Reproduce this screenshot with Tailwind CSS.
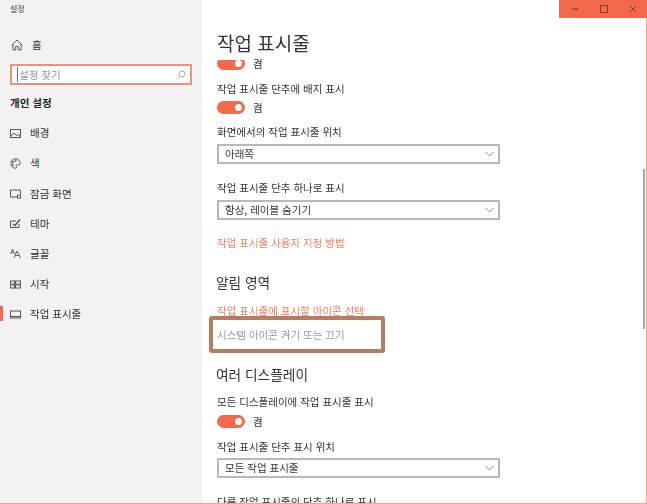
<!DOCTYPE html>
<html lang="ko">
<head>
<meta charset="UTF-8" />
<title>설정</title>
<script src="https://cdn.jsdelivr.net/npm/@tailwindcss/browser@4"></script>
</head>
<body class="bg-white overflow-hidden">
<div class="relative w-[647px] h-[504px] overflow-hidden flex blur-[0.5px] font-['Noto_Sans_CJK_KR','Noto_Sans',sans-serif] text-[10.5px] text-[#333]">

    <!-- Sidebar -->
    <aside class="w-[202px] h-full shrink-0 bg-[#f2f2f2]">
        <div class="h-[18px] pl-[10px] flex items-center text-[8px] text-[#444]">설정</div>
        <a class="h-[30px] mt-[12px] pl-[11px] flex items-center gap-[9px]">
            <svg class="w-[12px] h-[12px]" viewBox="0 0 12 12" fill="none" stroke="#555" stroke-width="1"><path d="M0.5 6.500 6 1l5.500 5.500M2 5.500V11h2.700V7.500h2.600V11H10V5.500"/></svg>
            <span>홈</span>
        </a>
        <div class="mx-[10px] mt-[4px] h-[21px] border-2 border-[#f58f7c] bg-white flex items-center justify-between pl-[5px] pr-[4px] text-[#999]">
            <span class="border-l border-[#666] pl-px">설정 찾기</span>
            <svg class="w-[10px] h-[10px]" viewBox="0 0 10 10" fill="none" stroke="#aaa"><circle cx="6" cy="4" r="3"/><path d="M4 6.200 1 9.300"/></svg>
        </div>
        <div class="mt-[8px] pl-[10px] h-[20px] flex items-center font-bold text-[#222]">개인 설정</div>
        <nav class="mt-[5px] flex flex-col">
            <a class="h-[30.200px] pl-[10px] flex items-center gap-[9px]">
                <svg class="w-[11px] h-[11px]" viewBox="0 0 11 11" fill="none" stroke="#555"><rect x="0.500" y="1.500" width="10" height="8"/><path d="M1 8l3-3 2.500 2.500L8 6.500l2 1.500"/></svg>
                <span>배경</span>
            </a>
            <a class="h-[30.200px] pl-[10px] flex items-center gap-[9px]">
                <svg class="w-[11px] h-[11px]" viewBox="0 0 11 11" fill="none" stroke="#555"><path d="M5.500 0.800a4.700 4.700 0 1 0 0 9.400c1.300 0 1.300-1 .8-1.700-.5-.8 0-1.700 1-1.700h1.500c1 0 1.400-.7 1.400-1.500C10.200 2.500 8 .8 5.500.8z"/><circle cx="3" cy="4" r=".7"/><circle cx="5.500" cy="2.800" r=".7"/><circle cx="2.800" cy="6.800" r=".7"/></svg>
                <span>색</span>
            </a>
            <a class="h-[30.200px] pl-[10px] flex items-center gap-[9px]">
                <svg class="w-[11px] h-[11px]" viewBox="0 0 11 11" fill="none" stroke="#555"><path d="M7 9H.5V2h10v4"/><rect x="7.500" y="7" width="3" height="3"/></svg>
                <span>잠금 화면</span>
            </a>
            <a class="h-[30.200px] pl-[10px] flex items-center gap-[9px]">
                <svg class="w-[11px] h-[11px]" viewBox="0 0 11 11" fill="none" stroke="#555"><path d="M9 6v3.500H.5V3H6"/><path d="M3 6l2 1.500L10 1.500" stroke-width="1.500"/></svg>
                <span>테마</span>
            </a>
            <a class="h-[30.200px] pl-[10px] flex items-center gap-[9px]">
                <svg class="w-[11px] h-[11px]" viewBox="0 0 11 11" fill="none" stroke="#555" stroke-width=".9"><path d="M.5 6 2.500 1 4.500 6M1.200 4.300h2.600M4 10l3-7 3.500 7M5.200 7.500h4.300"/></svg>
                <span>글꼴</span>
            </a>
            <a class="h-[30.200px] pl-[10px] flex items-center gap-[9px]">
                <svg class="w-[11px] h-[11px]" viewBox="0 0 11 11" fill="none" stroke="#555"><rect x=".5" y="2" width="4" height="3"/><rect x="5.500" y="2" width="5" height="3"/><rect x=".5" y="6" width="4" height="3"/><rect x="5.500" y="6" width="5" height="3"/></svg>
                <span>시작</span>
            </a>
            <a class="relative h-[30.200px] pl-[10px] flex items-center gap-[9px]">
                <span class="absolute left-0 top-[7px] w-[3px] h-[15px] bg-[#f2694d]"></span>
                <svg class="w-[11px] h-[11px]" viewBox="0 0 11 11" fill="none" stroke="#555"><rect x=".5" y="2" width="10" height="7"/><path d="M1 7.500h9"/></svg>
                <span>작업 표시줄</span>
            </a>
        </nav>
    </aside>

    <!-- Content -->
    <main class="flex-1 pl-[15px] pt-[31px]">
        <h1 class="h-[24px] leading-[24px] text-[19px] text-[#333]">작업 표시줄</h1>
        <div class="mt-[2px] h-[13px] flex items-end gap-[8px]">
            <div class="h-[10px] overflow-hidden flex items-end">
                <span class="w-[28px] h-[13px] rounded-full bg-[#f2694d] flex items-center justify-end pr-[3px]"><span class="w-[7px] h-[7px] rounded-full bg-white"></span></span>
            </div>
            <span class="leading-[13px]">켬</span>
        </div>
        <p class="mt-[11px] h-[16px] leading-[16px]">작업 표시줄 단추에 배지 표시</p>
        <div class="mt-[4px] h-[13px] flex items-center gap-[8px]">
            <span class="w-[28px] h-[13px] rounded-full bg-[#f2694d] flex items-center justify-end pr-[3px]"><span class="w-[7px] h-[7px] rounded-full bg-white"></span></span>
            <span>켬</span>
        </div>
        <p class="mt-[10px] h-[16px] leading-[16px]">화면에서의 작업 표시줄 위치</p>
        <div class="mt-[4px] w-[283px] h-[20px] border-2 border-[#b8b8b8] flex items-center justify-between pl-[6px] pr-[4px]">
            <span>아래쪽</span>
            <svg class="w-[9px] h-[6px]" viewBox="0 0 9 6" fill="none" stroke="#888"><path d="M.5 1 4.500 5 8.500 1"/></svg>
        </div>
        <p class="mt-[16px] h-[16px] leading-[16px]">작업 표시줄 단추 하나로 표시</p>
        <div class="mt-[4px] w-[283px] h-[20px] border-2 border-[#b8b8b8] flex items-center justify-between pl-[6px] pr-[4px]">
            <span>항상, 레이블 숨기기</span>
            <svg class="w-[9px] h-[6px]" viewBox="0 0 9 6" fill="none" stroke="#888"><path d="M.5 1 4.500 5 8.500 1"/></svg>
        </div>
        <p class="mt-[15px] h-[16px] leading-[16px] text-[#f58068]">작업 표시줄 사용자 지정 방법</p>
        <h2 class="mt-[20px] h-[22px] leading-[22px] text-[13.700px] -ml-px">알림 영역</h2>
        <p class="mt-[10px] h-[16px] leading-[16px] text-[#f58068]">작업 표시줄에 표시할 아이콘 선택</p>
        <div class="-ml-[8px] mt-[-3px] w-[176px] h-[37px] rounded-[3px] border-[4px] border-[#b87c5e] flex items-center pl-[4px] text-[#999]">시스템 아이콘 켜기 또는 끄기</div>
        <h2 class="mt-[10px] h-[22px] leading-[22px] text-[13.700px] -ml-px">여러 디스플레이</h2>
        <p class="mt-[9px] h-[16px] leading-[16px]">모든 디스플레이에 작업 표시줄 표시</p>
        <div class="mt-[5px] h-[13px] flex items-center gap-[8px]">
            <span class="w-[28px] h-[13px] rounded-full bg-[#f2694d] flex items-center justify-end pr-[3px]"><span class="w-[7px] h-[7px] rounded-full bg-white"></span></span>
            <span>켬</span>
        </div>
        <p class="mt-[11px] h-[16px] leading-[16px]">작업 표시줄 단추 표시 위치</p>
        <div class="mt-[3px] w-[283px] h-[20px] border-2 border-[#b8b8b8] flex items-center justify-between pl-[6px] pr-[4px]">
            <span>모든 작업 표시줄</span>
            <svg class="w-[9px] h-[6px]" viewBox="0 0 9 6" fill="none" stroke="#888"><path d="M.5 1 4.500 5 8.500 1"/></svg>
        </div>
        <p class="mt-[16px] h-[16px] leading-[16px]">다른 작업 표시줄의 단추 하나로 표시</p>
    </main>

    <!-- Title bar buttons, scrollbar and window edge lie over the content -->
    <div class="absolute top-0 right-0 w-[88px] h-[18px] bg-[#f2694d] flex items-center pl-px">
        <span class="w-[29px] flex justify-center"><svg class="w-[8px] h-[8px]" viewBox="0 0 8 8" stroke="#8a3a28"><path d="M1 4h6" stroke-width="1.200"/></svg></span>
        <span class="w-[29px] flex justify-center"><svg class="w-[8px] h-[8px]" viewBox="0 0 8 8" fill="none" stroke="#8a3a28"><rect x=".5" y=".5" width="7" height="7"/></svg></span>
        <span class="w-[29px] flex justify-center"><svg class="w-[8px] h-[8px]" viewBox="0 0 8 8" stroke="#8a3a28"><path d="M1 1l6 6M7 1 1 7"/></svg></span>
    </div>
    <div class="absolute top-[169px] left-[643px] w-[2px] h-[160px] bg-[#a8a8a8]"></div>
    <div class="absolute top-[18px] bottom-0 right-0 w-px bg-[#f9a595]"></div>
    <div class="absolute bottom-0 left-0 right-0 h-[1px] bg-[#f9a595]"></div>
</div>
</body>
</html>
